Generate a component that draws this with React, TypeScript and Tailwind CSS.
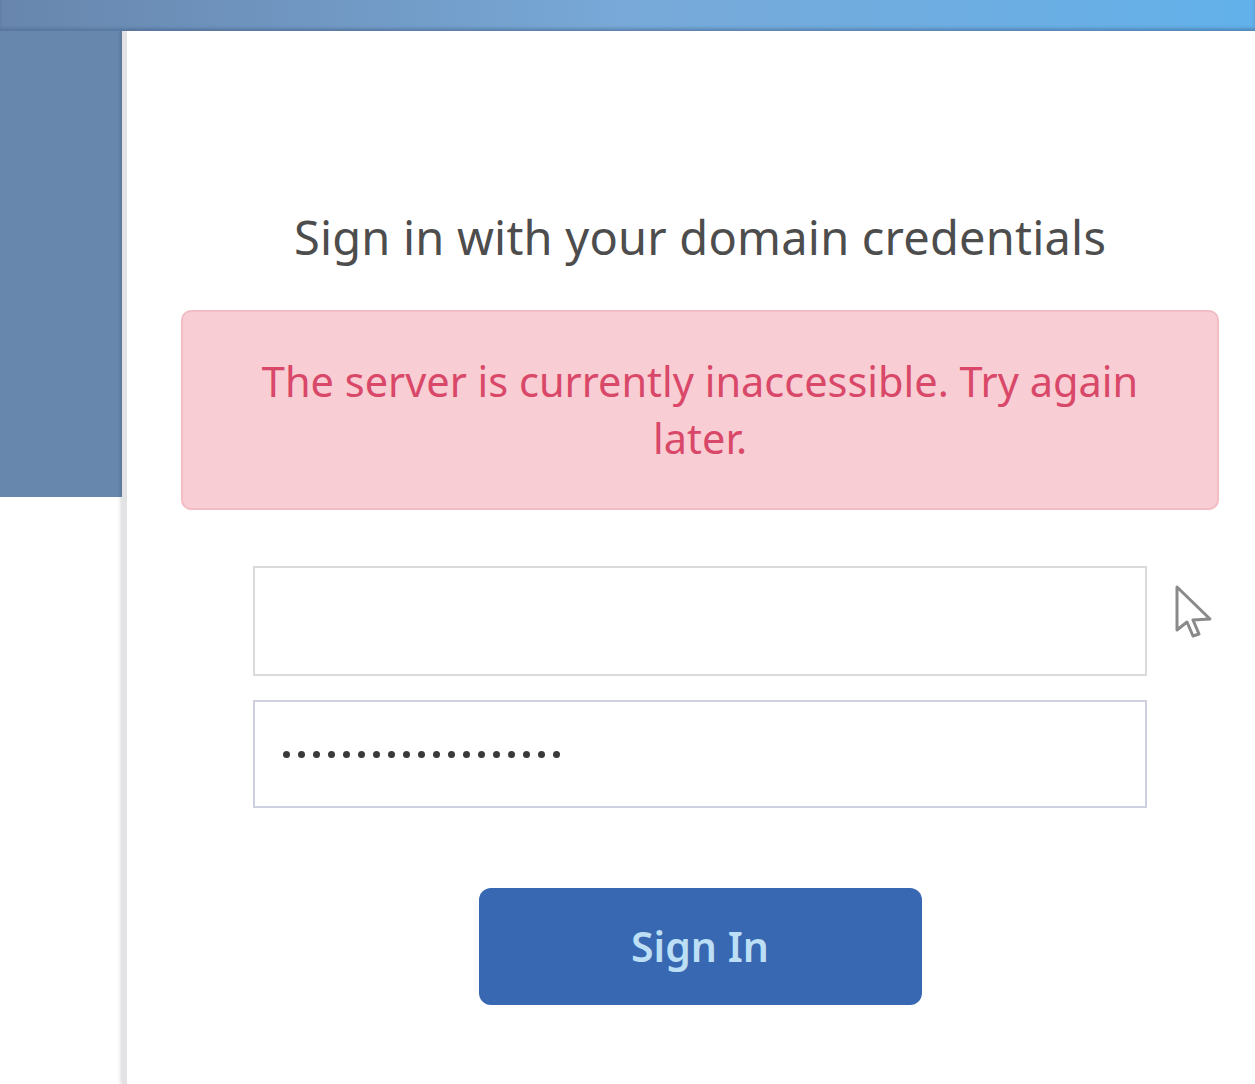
export default function App() {
  const dots = Array.from({ length: 19 });

  return (
    <div className="relative w-[1255px] h-[1084px] overflow-hidden bg-white font-['Noto_Sans',sans-serif]">
      {/* top band */}
      <div className="h-[31px] bg-gradient-to-r from-[#6886ad] via-[#78a9d8] to-[#62b1ea] shadow-[inset_0_-3px_3px_rgba(60,90,130,0.35)]" />

      <div className="flex">
        {/* left blue column */}
        <div className="w-[122px] shrink-0">
          <div className="h-[466px] bg-[#6887ad]" />
        </div>

        {/* card */}
        <div className="w-[1156px] shrink-0 h-[1053px] bg-white border-l-[5px] border-[#e3e3e6] shadow-[-2px_0_3px_rgba(0,0,0,0.12)] pl-[54px] pt-[174px]">
          <div className="w-[1038px] flex flex-col items-center">
            <h1 className="text-[47px] leading-[64px] text-[#4d4d4d] font-normal tracking-[0.2px]">
              Sign in with your domain credentials
            </h1>

            <div className="mt-[41px] w-[1038px] h-[200px] rounded-[10px] bg-[#f8cdd4] border-2 border-[#f2bcc5] flex items-center justify-center px-[60px]">
              <p className="text-center text-[41.5px] leading-[57px] text-[#d94868]">
                The server is currently inaccessible. Try again later.
              </p>
            </div>

            <div className="mt-[56px] w-[894px] h-[110px] border-2 border-[#dadada] bg-white" />
            <div className="mt-[24px] w-[894px] h-[108px] border-2 border-[#cfcfe2] bg-white flex items-center pl-[28px] gap-[8px]">
              {dots.map((_, i) => (
                <span key={i} className="w-[7px] h-[7px] rounded-full bg-[#3a3a3a]" />
              ))}
            </div>

            <button className="mt-[80px] w-[443px] h-[117px] rounded-[12px] bg-[#3768b1] text-[41px] font-semibold text-[#bcdff5]">
              Sign In
            </button>
          </div>
        </div>
      </div>

      {/* mouse pointer */}
      <svg className="absolute left-[1175px] top-[585px]" width="40" height="54" viewBox="-2 -2 40 54">
        <path
          d="M0 0 L0 43 L10 35 L16 49 L22 47 L16 33 L33 32 Z"
          fill="white"
          stroke="#8a8a8a"
          strokeWidth="3"
          strokeLinejoin="round"
        />
      </svg>
    </div>
  );
}
